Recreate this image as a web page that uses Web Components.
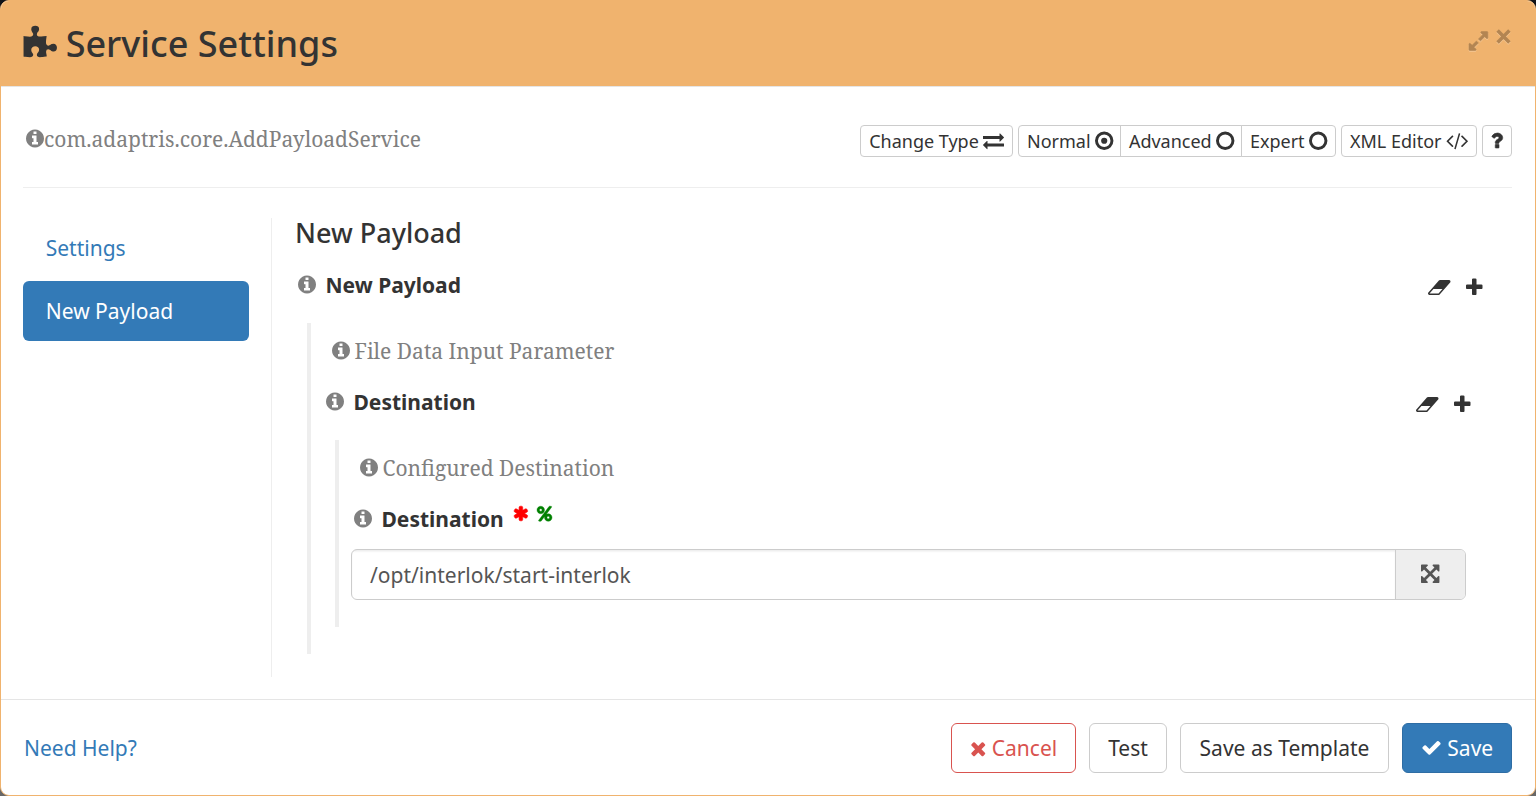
<!DOCTYPE html>
<html lang="en">
<head>
<meta charset="utf-8">
<title>Service Settings</title>
<style>
html,body{margin:0;height:100%}
body{background:linear-gradient(#111318 0 50%,#686868 50%);font:21px/30px "Noto Sans",sans-serif;color:#333;overflow:hidden}
.link{color:#337ab7}
.head-tools{display:flex;align-items:flex-start;gap:8.5px;opacity:.25;color:#000;filter:drop-shadow(0 1.5px 0 #fff)}
.buttons{display:flex;gap:5px}
.group{display:flex}
.group>tool-button+tool-button{margin-left:-1px}
.actions{display:flex;gap:13px}
</style>
</head>
<body>
<settings-dialog>
  <fa-icon slot="title" name="puzzle" style="font-size:36px;margin-left:-.5px;margin-right:9px"></fa-icon>
  <span slot="title">Service Settings</span>
  <div slot="tools" class="head-tools"><fa-icon name="expand" style="font-size:22px;margin-top:1px"></fa-icon><fa-icon name="close" style="font-size:15px"></fa-icon></div>

  <type-note slot="type" style="--gap:0px">com.adaptris.core.AddPayloadService</type-note>
  <div slot="modes" class="buttons">
    <tool-button style="width:153px">Change Type<fa-icon name="exchange" style="font-size:21px;margin-top:-1px"></fa-icon></tool-button>
    <div class="group">
      <tool-button style="width:103px;--r:4px 0 0 4px;--nudge:1px">Normal<fa-icon name="dot" style="font-size:21.5px;margin-top:-1px"></fa-icon></tool-button>
      <tool-button style="width:122px;--r:0;--nudge:1px">Advanced<fa-icon name="circle" style="font-size:21.5px;margin-top:-1px"></fa-icon></tool-button>
      <tool-button style="width:95px;--r:0 4px 4px 0">Expert<fa-icon name="circle" style="font-size:21.5px;margin-top:-1px"></fa-icon></tool-button>
    </div>
    <tool-button style="width:136px">XML Editor<fa-icon name="code" style="font-size:21px;margin-top:-1px"></fa-icon></tool-button>
    <tool-button style="width:30px"><fa-icon name="question" style="font-size:21px;margin-top:-1px"></fa-icon></tool-button>
  </div>

  <nav-item slot="nav">Settings</nav-item>
  <nav-item slot="nav" active>New Payload</nav-item>

  <span slot="heading">New Payload</span>
  <field-label tools>New Payload</field-label>
  <field-group>
    <type-note>File Data Input Parameter</type-note>
    <field-label tools>Destination</field-label>
    <field-group>
      <type-note>Configured Destination</type-note>
      <field-label flags>Destination</field-label>
      <path-input>/opt/interlok/start-interlok</path-input>
    </field-group>
  </field-group>

  <span slot="help" class="link">Need Help?</span>
  <div slot="actions" class="actions">
    <action-button kind="danger" style="width:125px"><fa-icon name="times" style="margin-top:1px"></fa-icon>Cancel</action-button>
    <action-button style="width:78px">Test</action-button>
    <action-button style="width:209px">Save as Template</action-button>
    <action-button kind="primary" style="width:110px"><fa-icon name="check"></fa-icon>Save</action-button>
  </div>
</settings-dialog>

<script>
// name: [viewBox x, viewBox width, markup]; every icon is 1792 units high
const ICONS = {
  puzzle:[64,1700,'<path d="M1755 1083q0 81-44.5 135t-123.5 54q-41 0-77.5-17.5t-59-38-56.5-38-71-17.5q-110 0-110 124 0 39 16 115t15 115v5q-22 0-33 1-34 3-97.5 11.5t-115.5 13.5-98 5q-61 0-103-26.5t-42-83.5q0-37 17.5-71t38-56.5 38-59 17.5-77.5q0-79-54-123.5t-135-44.5q-84 0-143 45.5t-59 127.5q0 43 15 83t33.5 64.5 33.5 53 15 50.5q0 45-46 89-37 35-117 35-95 0-245-24-9-2-27.5-4t-27.5-4l-13-2q-1 0-3-1-2 0-2-1v-1024q2 1 17.5 3.5t34 5 21.5 3.5q150 24 245 24 80 0 117-35 46-44 46-89 0-22-15-50.5t-33.5-53-33.5-64.5-15-83q0-82 59-127.5t144-45.5q80 0 134 44.5t54 123.5q0 41-17.5 77.5t-38 59-38 56.5-17.5 71q0 57 42 83.5t103 26.5q64 0 180-15t163-17v2q-1 2-3.5 17.5t-5 34-3.5 21.5q-24 150-24 245 0 80 35 117 44 46 89 46 22 0 50.5-15t53-33.5 64.5-33.5 83-15q82 0 127.5 59t45.5 143z"/>'],
  info:[128,1536,'<path d="M1152 1376v-160q0-14-9-23t-23-9h-96v-512q0-14-9-23t-23-9h-320q-14 0-23 9t-9 23v160q0 14 9 23t23 9h96v320h-96q-14 0-23 9t-9 23v160q0 14 9 23t23 9h448q14 0 23-9t9-23zm-128-896v-160q0-14-9-23t-23-9h-192q-14 0-23 9t-9 23v160q0 14 9 23t23 9h192q14 0 23-9t9-23zm640 416q0 209-103 385.5t-279.5 279.5-385.5 103-385.5-103-279.5-279.5-103-385.5 103-385.5 279.5-279.5 385.5-103 385.5 103 279.5 279.5 103 385.5z"/>'],
  times:[192,1408,'<path d="M1490 1322q0 40-28 68l-136 136q-28 28-68 28t-68-28l-294-294-294 294q-28 28-68 28t-68-28l-136-136q-28-28-28-68t28-68l294-294-294-294q-28-28-28-68t28-68l136-136q28-28 68-28t68 28l294 294 294-294q28-28 68-28t68 28l136 136q28 28 28 68t-28 68l-294 294 294 294q28 28 28 68z"/>'],
  close:[0,1792,'<path d="M190 190L1602 1602M1602 190L190 1602" fill="none" stroke="currentColor" stroke-width="420"/>'],
  check:[0,1792,'<path d="M1671 566q0 40-28 68l-724 724-136 136q-28 28-68 28t-68-28l-136-136-362-362q-28-28-28-68t28-68l136-136q28-28 68-28t68 28l294 295 656-657q28-28 68-28t68 28l136 136q28 28 28 68z"/>'],
  plus:[192,1408,'<path d="M1600 736v192q0 40-28 68t-68 28h-416v416q0 40-28 68t-68 28h-192q-40 0-68-28t-28-68v-416h-416q-40 0-68-28t-28-68v-192q0-40 28-68t68-28h416v-416q0-40 28-68t68-28h192q40 0 68 28t28 68v416h416q40 0 68 28t28 68z"/>'],
  eraser:[0,1920,'<path d="M896 1408l336-384h-768l-336 384h768zm1013-1077q15 34 9.5 71.5t-30.5 65.5l-896 1024q-38 44-96 44h-768q-38 0-69.5-20.5t-47.5-54.5q-15-34-9.5-71.5t30.5-65.5l896-1024q38-44 96-44h768q38 0 69.5 20.5t47.5 54.5z"/>'],
  asterisk:[64,1664,'<path d="M1546 1050q46 26 59.5 77.5t-12.5 97.5l-64 110q-26 46-77.5 59.5t-97.5-12.5l-266-153v307q0 52-38 90t-90 38h-128q-52 0-90-38t-38-90v-307l-266 153q-46 26-97.5 12.5t-77.5-59.5l-64-110q-26-46-12.5-97.5t59.5-77.5l266-154-266-154q-46-26-59.5-77.5t12.5-97.5l64-110q26-46 77.5-59.5t97.5 12.5l266 153v-307q0-52 38-90t90-38h128q52 0 90 38t38 90v307l266-153q46-26 97.5-12.5t77.5 59.5l64 110q26 46 12.5 97.5t-59.5 77.5l-266 154z" stroke="currentColor" stroke-width="60"/>'],
  percent:[128,1536,'<path stroke="currentColor" stroke-width="40" d="M1408 1280q0-52-38-90t-90-38-90 38-38 90 38 90 90 38 90-38 38-90zm-768-768q0-52-38-90t-90-38-90 38-38 90 38 90 90 38 90-38 38-90zm1024 768q0 159-112.5 271.5t-271.5 112.5-271.5-112.5-112.5-271.5 112.5-271.5 271.5-112.5 271.5 112.5 112.5 271.5zm-32-1088q0 20-13 38l-1056 1408q-19 26-51 26h-160q-26 0-45-19t-19-45q0-20 13-38l1056-1408q19-26 51-26h160q26 0 45 19t19 45zm-736 320q0 159-112.5 271.5t-271.5 112.5-271.5-112.5-112.5-271.5 112.5-271.5 271.5-112.5 271.5 112.5 112.5 271.5z"/>'],
  expand:[128,1536,'<path d="M883 1056q0 13-10 23l-332 332 144 144q19 19 19 45t-19 45-45 19h-448q-26 0-45-19t-19-45v-448q0-26 19-45t45-19 45 19l144 144 332-332q10-10 23-10t23 10l114 114q10 10 10 23zm781-864v448q0 26-19 45t-45 19-45-19l-144-144-332 332q-10 10-23 10t-23-10l-114-114q-10-10-10-23t10-23l332-332-144-144q-19-19-19-45t19-45 45-19h448q26 0 45 19t19 45z" stroke="currentColor" stroke-width="50"/>'],
  arrows:[128,1536,'<path d="M1411 541l-355 355 355 355 144-144q29-31 70-14 39 17 39 59v448q0 26-19 45t-45 19h-448q-42 0-59-40-17-39 14-69l144-144-355-355-355 355 144 144q31 30 14 69-17 40-59 40h-448q-26 0-45-19t-19-45v-448q0-42 40-59 39-17 69 14l144 144 355-355-355-355-144 144q-19 19-45 19-12 0-24-5-40-17-40-59v-448q0-26 19-45t45-19h448q42 0 59 40 17 39-14 69l-144 144 355 355 355-355-144-144q-31-30-14-69 17-40 59-40h448q26 0 45 19t19 45v448q0 42-39 59-13 5-25 5-26 0-45-19z"/>'],
  exchange:[0,1792,'<path d="M1792 1184v192q0 13-9.5 22.5t-22.5 9.5h-1376v192q0 13-9.5 22.5t-22.5 9.5q-12 0-24-10l-319-320q-9-9-9-22 0-14 9-23l320-320q9-9 23-9 13 0 22.5 9.5t9.5 22.5v192h1376q13 0 22.5 9.5t9.5 22.5zm0-544q0 14-9 23l-320 320q-9 9-23 9-13 0-22.5-9.5t-9.5-22.5v-192h-1376q-13 0-22.5-9.5t-9.5-22.5v-192q0-13 9.5-22.5t22.5-9.5h1376v-192q0-14 9-23t23-9q12 0 24 10l319 319q9 9 9 23z"/>'],
  code:[0,1920,'<path d="M617 1399l-50 50q-10 10-23 10t-23-10l-466-466q-10-10-10-23t10-23l466-466q10-10 23-10t23 10l50 50q10 10 10 23t-10 23l-393 393 393 393q10 10 10 23t-10 23zm591-1067l-373 1291q-4 13-15.5 19.5t-23.5 2.5l-62-17q-13-4-19.5-15.5t-2.5-24.5l373-1291q4-13 15.5-19.5t23.5-2.5l62 17q13 4 19.5 15.5t2.5 24.5zm657 651l-466 466q-10 10-23 10t-23-10l-50-50q-10-10-10-23t10-23l393-393-393-393q-10-10-10-23t10-23l50-50q10-10 23-10t23 10l466 466q10 10 10 23t-10 23z"/>'],
  circle:[128,1536,'<circle cx="896" cy="896" r="645" fill="none" stroke="currentColor" stroke-width="246"/>'],
  dot:[128,1536,'<circle cx="896" cy="896" r="645" fill="none" stroke="currentColor" stroke-width="246"/><circle cx="896" cy="896" r="256"/>'],
  question:[320,1152,'<path d="M1088 1256v240q0 16-12 28t-28 12h-240q-16 0-28-12t-12-28v-240q0-16 12-28t28-12h240q16 0 28 12t12 28zm316-600q0 54-15.5 101t-35 76.5-55 59.5-57.5 43.5-61 35.5q-41 23-68.5 65t-27.5 67q0 17-12 32.5t-28 15.5h-240q-15 0-25.5-18.5t-10.5-37.5v-45q0-83 65-156.5t143-108.5q59-27 84-56t25-76q0-42-46.5-74t-107.5-32q-65 0-108 29-35 25-107 115-13 16-31 16-12 0-25-8l-164-125q-13-10-15.5-25t5.5-28q160-266 464-266 80 0 161 31t146 83 106 127.5 41 158.5z" stroke="currentColor" stroke-width="50"/>']
};
function define(name, html) {
  customElements.define(name, class extends HTMLElement {
    constructor() {
      super();
      this.attachShadow({mode:'open'}).innerHTML = typeof html === 'function' ? html(this) : html;
    }
  });
}
define('fa-icon', el => {
  const [x, w, body] = ICONS[el.getAttribute('name')];
  return `<style>:host{display:block;flex:none}svg{display:block;height:1em;width:${w/1792}em;fill:currentColor;overflow:visible}</style>
  <svg viewBox="${x} 0 ${w} 1792">${body}</svg>`;
});
define('tool-button', `<style>:host{display:flex;box-sizing:border-box;height:32px;align-items:center;justify-content:center;gap:4px;padding-left:var(--nudge,0);border:1px solid #ccc;border-radius:var(--r,4px);font-size:18px;line-height:30px;white-space:nowrap;background:#fff}</style><slot></slot>`);
define('action-button', `<style>:host{display:flex;box-sizing:border-box;height:50px;align-items:center;justify-content:center;gap:5.5px;border:1px solid #ccc;border-radius:6px;white-space:nowrap;background:#fff}
:host([kind=danger]){color:#d9534f;border-color:#d9534f}
:host([kind=primary]){color:#fff;background:#337ab7;border-color:#2e6da4}</style><slot></slot>`);
define('nav-item', `<style>:host{display:block;padding:15px 22.75px;border-radius:6px;color:#337ab7;margin-bottom:3px}
:host([active]){background:#337ab7;color:#fff}</style><slot></slot>`);
define('type-note', `<style>:host{display:flex;height:30px;align-items:center;gap:var(--gap,5px);color:gray;font-family:"Noto Serif","Droid Serif","Liberation Serif",serif;padding-left:20.5px;white-space:nowrap}
fa-icon{margin-top:-1px}</style><fa-icon name="info"></fa-icon><span><slot></slot></span>`);
define('field-label', el => `<style>:host{display:flex;height:30px;align-items:center;padding:0 8px 0 14.5px;font-weight:700}
:host(:not(:first-child)){margin-top:21px}
.info{color:gray;margin:-1px 10px 0 0}.tools{display:flex;align-items:center;gap:15px;margin-left:auto;margin-top:5px}
.flags{display:flex;align-items:center;gap:8.5px;margin:-11px 0 0 9px;font-size:17px}</style>
<fa-icon class="info" name="info"></fa-icon><slot></slot>
${el.hasAttribute('flags') ? '<div class="flags"><fa-icon name="asterisk" style="color:red"></fa-icon><fa-icon name="percent" style="color:green;font-size:17.5px"></fa-icon></div>' : ''}
${el.hasAttribute('tools') ? '<div class="tools"><fa-icon name="eraser"></fa-icon><fa-icon name="plus"></fa-icon></div>' : ''}`);
define('field-group', `<style>:host{display:block;margin:23px 12px 0 24px;border-left:4px solid #eee;padding:13px 0 27px}</style><slot></slot>`);
define('path-input', `<style>:host{display:flex;height:51px;box-sizing:border-box;margin:15px 0 0 12px;border:1px solid #ccc;border-radius:6px;overflow:hidden;color:#555}
.value{flex:1;padding:10px 18px;line-height:30px;box-shadow:inset 0 1.5px 1.5px rgba(0,0,0,.075)}
.addon{width:69px;background:#eee;border-left:1px solid #ccc;display:flex;align-items:center;justify-content:center}
fa-icon{font-size:21.5px;margin:-1px 1px 0 0}</style>
<div class="value"><slot></slot></div><div class="addon"><fa-icon name="arrows"></fa-icon></div>`);
define('settings-dialog', `<style>
:host{display:flex;flex-direction:column;box-sizing:border-box;height:796px;border:1px solid #f0b36e;border-radius:9px;background:#fff;overflow:hidden}
header{box-sizing:border-box;height:86px;background:#f0b36e;border-bottom:1px solid #e5e5e5;display:flex;padding:0 24px 0 22px}
.title{display:flex;align-items:center;font-size:36px;font-weight:500;line-height:40px;flex:1}
.tools{margin-top:28px}
.bar{display:flex;justify-content:space-between;height:62px;margin:38px 23px 0 22px;border-bottom:1px solid #eee}
.type{margin:-1px 0 0 -17.5px}
.cols{display:flex;margin:30px 23px 0 22px;height:459px}
nav{width:226px;margin-right:22px}
main{flex:1;border-left:1px solid #eee;padding:0 22px 0 11px}
h4{margin:-1px 0 22px 12px;font-size:27px;font-weight:500;line-height:31px}
footer{margin-top:22px;border-top:1px solid #e5e5e5;flex:1;display:flex;justify-content:space-between;align-items:center;padding:0 23px}
</style>
<header><div class="title"><slot name="title"></slot></div><div class="tools"><slot name="tools"></slot></div></header>
<section class="bar"><div class="type"><slot name="type"></slot></div><slot name="modes"></slot></section>
<section class="cols"><nav><slot name="nav"></slot></nav><main><h4><slot name="heading"></slot></h4><div><slot></slot></div></main></section>
<footer><slot name="help"></slot><slot name="actions"></slot></footer>`);
</script>
</body>
</html>
